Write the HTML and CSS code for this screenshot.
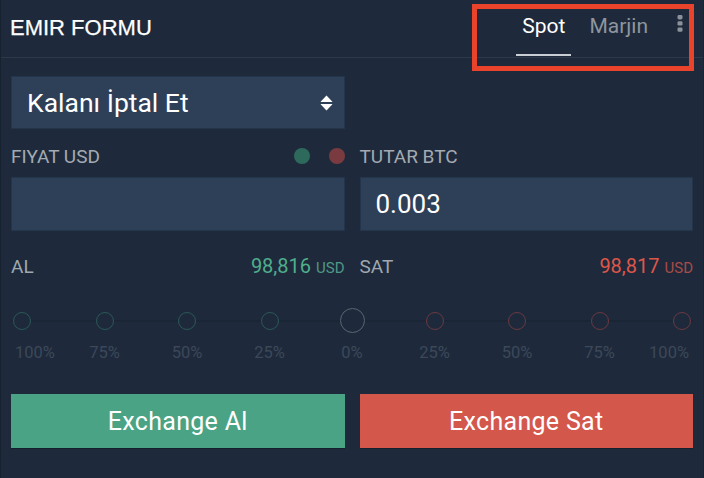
FILE: index.html
```html
<!DOCTYPE html>
<html lang="tr">
<head>
<meta charset="utf-8">
<title>Emir Formu</title>
<link rel="stylesheet" href="styles.css">
</head>
<body>
<div class="panel">
  <header class="head">
    <h1 class="title">EMIR FORMU</h1>
    <nav class="tabs">
      <span class="tab active">Spot</span>
      <span class="tab">Marjin</span>
      <span class="kebab">
        <svg width="6" height="17" viewBox="0 0 6 17"><rect x="0.5" y="0" width="5" height="4.4" rx="1.4"/><rect x="0.5" y="6.2" width="5" height="4.4" rx="1.4"/><rect x="0.5" y="12.4" width="5" height="4.4" rx="1.4"/></svg>
      </span>
    </nav>
  </header>

  <main class="form">
    <div class="grid2">
      <div class="select">
        <span>Kalanı İptal Et</span>
        <svg class="updown" width="13" height="16" viewBox="0 0 13 16"><path d="M6.5 0.6 L12.2 6.4 Q12.6 7 11.8 7 L1.2 7 Q0.4 7 0.8 6.4 Z"/><path d="M6.5 15.4 L12.2 9.6 Q12.6 9 11.8 9 L1.2 9 Q0.4 9 0.8 9.6 Z"/></svg>
      </div>
    </div>

    <div class="grid2 labels">
      <div class="label-row">
        <span>FIYAT USD</span>
        <span class="dots"><i class="dot dot-g"></i><i class="dot dot-r"></i></span>
      </div>
      <div class="label-row"><span>TUTAR BTC</span></div>
    </div>

    <div class="grid2">
      <div class="input"></div>
      <div class="input">0.003</div>
    </div>

    <div class="grid2 prices">
      <div class="price-row">
        <span>AL</span>
        <span class="val buy">98,816<small>USD</small></span>
      </div>
      <div class="price-row">
        <span>SAT</span>
        <span class="val sell">98,817<small>USD</small></span>
      </div>
    </div>

    <div class="slider">
      <div class="track"></div>
      <div class="pt first buy"><span class="knob"></span><span class="pct">100%</span></div>
      <div class="pt buy"><span class="knob"></span><span class="pct">75%</span></div>
      <div class="pt buy"><span class="knob"></span><span class="pct">50%</span></div>
      <div class="pt buy"><span class="knob"></span><span class="pct">25%</span></div>
      <div class="pt mid"><span class="knob"></span><span class="pct">0%</span></div>
      <div class="pt sell"><span class="knob"></span><span class="pct">25%</span></div>
      <div class="pt sell"><span class="knob"></span><span class="pct">50%</span></div>
      <div class="pt sell"><span class="knob"></span><span class="pct">75%</span></div>
      <div class="pt last sell"><span class="knob"></span><span class="pct">100%</span></div>
    </div>

    <div class="grid2 buttons">
      <button class="btn btn-buy">Exchange Al</button>
      <button class="btn btn-sell">Exchange Sat</button>
    </div>
  </main>

  <div class="annot"></div>
</div>
</body>
</html>
```

FILE: styles.css
```css
* { box-sizing: border-box; }

html, body {
  margin: 0;
  padding: 0;
  background: #1e2a3b;
}

body {
  width: 704px;
  height: 478px;
  overflow: hidden;
  font-family: Roboto, "Noto Sans", sans-serif;
  color: #ffffff;
  -webkit-font-smoothing: antialiased;
}

.panel {
  position: relative;
  width: 704px;
  height: 478px;
  background: #1e2a3b;
  border-left: 1px solid #172230;
  border-right: 1px solid #1a2534;
}

/* Header */
.head {
  height: 58px;
  display: flex;
  justify-content: space-between;
  align-items: stretch;
  padding: 0 20px 0 9px;
  border-bottom: 1px solid #2b3948;
}

.title {
  margin: 0;
  padding-top: 17px;
  font-family: "Liberation Sans", Arial, sans-serif;
  font-weight: 400;
  font-size: 22px;
  line-height: 22px;
  color: #ffffff;
  -webkit-text-stroke: 0.25px #ffffff;
}

.tabs {
  display: flex;
  align-items: stretch;
}

.tab {
  display: flex;
  align-items: center;
  padding: 0 6px 2px;
  margin-bottom: 1px;
  font-size: 21px;
  color: #8e959e;
  border-bottom: 2px solid transparent;
}

.tab + .tab { margin-left: 12px; }

.tab.active {
  color: #ffffff;
  border-bottom-color: #c9ced5;
}

.kebab {
  margin-left: 23px;
  padding-top: 15px;
  fill: #8a919a;
}

.kebab svg { display: block; }

/* Form body */
.form {
  padding: 0 10px;
}

.grid2 {
  display: grid;
  grid-template-columns: 1fr 1fr;
  column-gap: 15px;
}

.select {
  margin-top: 18px;
  height: 53px;
  display: flex;
  align-items: center;
  justify-content: space-between;
  padding: 0 11px 0 15px;
  background: #2e4058;
  border: 1px solid #24344a;
  font-size: 26.5px;
  color: #ffffff;
}

.updown { fill: #ffffff; display: block; }

.labels {
  margin-top: 15px;
  margin-bottom: 9px;
}

.label-row {
  height: 24px;
  display: flex;
  align-items: center;
  justify-content: space-between;
  font-size: 19px;
  color: #a4aab2;
}

.dots {
  display: flex;
  gap: 19px;
}

.dot {
  display: block;
  width: 16px;
  height: 16px;
  border-radius: 50%;
}

.dot-g { background: #2e6a5b; }
.dot-r { background: #7a3b40; }

.input {
  height: 54px;
  display: flex;
  align-items: center;
  padding: 0 15px;
  background: #2e4058;
  border: 1px solid #24344a;
  font-size: 26px;
  color: #ffffff;
}

.prices {
  margin-top: 23px;
}

.price-row {
  height: 24px;
  display: flex;
  align-items: center;
  justify-content: space-between;
  font-size: 19px;
  color: #a0a7af;
}

.val { font-size: 20px; }

.val small {
  font-size: 15px;
  margin-left: 5px;
}

.val.buy { color: #4fae8b; }
.val.buy small { color: #4f9886; }
.val.sell { color: #df5649; }
.val.sell small { color: #a94b48; }

/* Slider */
.slider {
  position: relative;
  margin-top: 30px;
  display: flex;
  justify-content: space-between;
}

.track {
  position: absolute;
  left: 0;
  right: 0;
  top: 12px;
  height: 2px;
  background: #1a2635;
}

.pt {
  position: relative;
  width: 22px;
  display: flex;
  flex-direction: column;
  align-items: center;
}

.knob {
  display: block;
  width: 18px;
  height: 18px;
  margin-top: 4px;
  margin-bottom: 4px;
  border-radius: 50%;
  border: 1.5px solid #2a5857;
  background: #1e2a3b;
}

.pt.sell .knob { border-color: #6a3940; }

.pt.mid .knob {
  width: 25px;
  height: 25px;
  margin-top: 0;
  margin-bottom: 1px;
  flex-shrink: 0;
  border-color: #5b6571;
}

.pct {
  margin-top: 9px;
  font-size: 16.5px;
  line-height: 20px;
  color: #3c4859;
  white-space: nowrap;
}

.pt.first .pct { align-self: flex-start; margin-left: 4px; }
.pt.last .pct { align-self: flex-end; margin-right: 4px; }

/* Buttons */
.buttons {
  margin-top: 31px;
}

.btn {
  height: 54px;
  border: none;
  margin: 0;
  padding: 0;
  font-family: Roboto, "Noto Sans", sans-serif;
  font-size: 25px;
  letter-spacing: 0.3px;
  color: #ffffff;
  box-shadow: 0 1px 0 rgba(0, 0, 0, 0.25);
}

.btn-buy { background: #4aa384; }
.btn-sell { background: #d4574b; }

/* Reviewer annotation overlay */
.annot {
  position: absolute;
  left: 471px;
  top: 4px;
  width: 222px;
  height: 67px;
  border: 5px solid #e9432b;
  pointer-events: none;
}
```
